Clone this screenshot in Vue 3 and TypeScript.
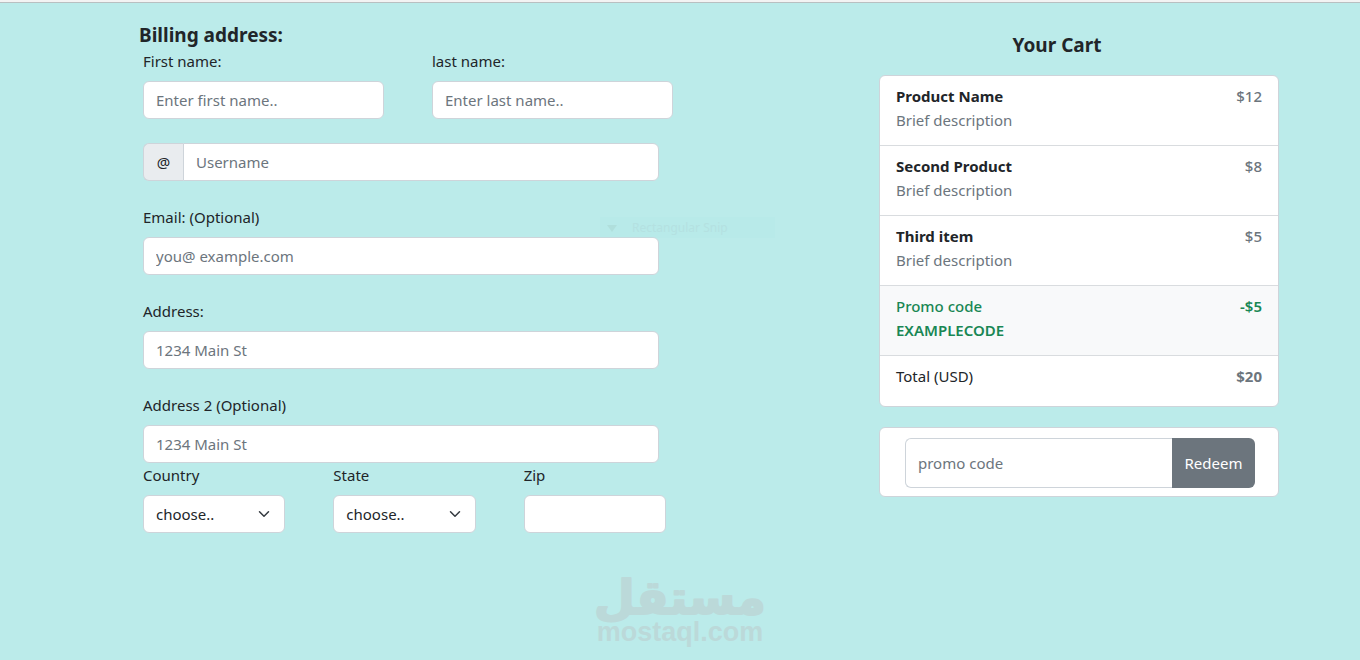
<script setup lang="ts">
import { ref } from 'vue'

interface CartItem {
  name: string
  detail: string
  price: string
  promo?: boolean
}

const items: CartItem[] = [
  { name: 'Product Name', detail: 'Brief description', price: '$12' },
  { name: 'Second Product', detail: 'Brief description', price: '$8' },
  { name: 'Third item', detail: 'Brief description', price: '$5' },
  { name: 'Promo code', detail: 'EXAMPLECODE', price: '-$5', promo: true },
]

const country = ref('')
const state = ref('')
const promoCode = ref('')
</script>

<template>
  <div class="page">
    <main class="layout">
      <form class="billing" @submit.prevent>
        <h1 class="title">Billing address:</h1>
        <div class="row names">
          <div class="field">
            <label for="first">First name:</label>
            <input id="first" class="control" type="text" placeholder="Enter first name.." />
          </div>
          <div class="field">
            <label for="last">last name:</label>
            <input id="last" class="control" type="text" placeholder="Enter last name.." />
          </div>
        </div>
        <div class="group wide">
          <label class="addon" for="username">@</label>
          <input id="username" class="control" type="text" placeholder="Username" />
        </div>
        <div class="field wide">
          <label for="email">Email: (Optional)</label>
          <input id="email" class="control" type="email" placeholder="you@ example.com" />
        </div>
        <div class="field wide">
          <label for="address">Address:</label>
          <input id="address" class="control" type="text" placeholder="1234 Main St" />
        </div>
        <div class="field wide last">
          <label for="address2">Address 2 (Optional)</label>
          <input id="address2" class="control" type="text" placeholder="1234 Main St" />
        </div>
        <div class="row region">
          <div class="field">
            <label for="country">Country</label>
            <div class="picker">
              <select id="country" v-model="country" class="control">
                <option value="">choose..</option>
              </select>
              <svg class="chevron" viewBox="0 0 16 16" aria-hidden="true"><path d="m2 5 6 6 6-6" /></svg>
            </div>
          </div>
          <div class="field">
            <label for="state">State</label>
            <div class="picker">
              <select id="state" v-model="state" class="control">
                <option value="">choose..</option>
              </select>
              <svg class="chevron" viewBox="0 0 16 16" aria-hidden="true"><path d="m2 5 6 6 6-6" /></svg>
            </div>
          </div>
          <div class="field">
            <label for="zip">Zip</label>
            <input id="zip" class="control" type="text" />
          </div>
        </div>
      </form>

      <section class="cart">
        <h2 class="title cart-title">Your Cart</h2>
        <ul class="list">
          <li v-for="item in items" :key="item.name" class="item" :class="{ promo: item.promo }">
            <div>
              <div class="name">{{ item.name }}</div>
              <div class="detail">{{ item.detail }}</div>
            </div>
            <span class="price">{{ item.price }}</span>
          </li>
          <li class="item total">
            <span>Total (USD)</span>
            <strong class="price">$20</strong>
          </li>
        </ul>
        <form class="redeem" @submit.prevent>
          <input v-model="promoCode" class="control code" type="text" placeholder="promo code" aria-label="promo code" />
          <button class="button" type="submit">Redeem</button>
        </form>
      </section>
    </main>

    <div class="snip">
      <svg class="snip-icon" viewBox="0 0 16 16" aria-hidden="true"><path d="M3 5h10l-5 7z" /></svg>
      <span>Rectangular Snip</span>
    </div>

    <svg class="watermark" viewBox="0 0 200 90" role="img" aria-label="mostaql.com">
      <text class="arabic" x="100" y="44" text-anchor="middle">مستقل</text>
      <text class="latin" x="100" y="71" text-anchor="middle">mostaql.com</text>
    </svg>
  </div>
</template>

<style>
body {
  margin: 0;
  background: #bbebea;
}
</style>

<style scoped>
* {
  box-sizing: border-box;
}

.page {
  position: relative;
  min-height: 100vh;
  border-top: 2px solid #f3f3f3;
  background: #bbebea;
  color: #212529;
  font-family: "Segoe UI", "Noto Sans", "Open Sans", sans-serif;
  font-size: 15px;
  line-height: 24px;
  box-shadow: inset 0 1px #b9bfc1;
}

.layout {
  display: grid;
  grid-template-columns: 139fr 534fr 206fr 400fr 81fr;
  padding-top: 21px;
  align-items: start;
}

.title {
  margin: 0;
  font-size: 19px;
  font-weight: 700;
  line-height: 24px;
}

.billing {
  grid-column: 2;
  padding-left: 4px;
}

.billing > .title {
  margin: 0 0 2px -4px;
}

.row {
  display: grid;
  column-gap: 48px;
}

.names {
  grid-template-columns: 1fr 1fr;
  margin-bottom: 24px;
}

.region {
  grid-template-columns: 1fr 1fr 1fr;
  margin-right: 7px;
}

.field {
  min-width: 0;
}

.field > label {
  display: block;
  margin-bottom: 8px;
}

.wide {
  margin: 0 14px 24px 0;
}

.wide.last {
  margin-bottom: 0;
}

.control {
  display: block;
  width: 100%;
  height: 38px;
  margin: 0;
  padding: 6px 12px;
  border: 1px solid #ced4da;
  border-radius: 6px;
  background: #fff;
  color: #212529;
  font: inherit;
  appearance: none;
}

.control::placeholder {
  color: #6c757d;
  opacity: 1;
}

.group {
  display: flex;
}

.addon {
  flex: none;
  width: 40px;
  padding: 6px 0;
  border: 1px solid #ced4da;
  border-right: 0;
  border-radius: 6px 0 0 6px;
  background: #e9ecef;
  text-align: center;
}

.group .control {
  flex: 1;
  min-width: 0;
  border-radius: 0 6px 6px 0;
}

.picker {
  display: grid;
  align-items: center;
}

.picker > * {
  grid-area: 1 / 1;
}

.chevron {
  width: 16px;
  height: 12px;
  margin-right: 13px;
  justify-self: end;
  pointer-events: none;
  fill: none;
  stroke: #343a40;
  stroke-width: 2;
  stroke-linecap: round;
  stroke-linejoin: round;
}

.cart {
  grid-column: 4;
  padding-top: 10px;
}

.cart-title {
  margin-bottom: 18px;
  padding-right: 44px;
  text-align: center;
}

.list {
  margin: 0 0 20px;
  padding: 0;
  overflow: hidden;
  border: 1px solid #ced4da;
  border-radius: 6px;
  background: #fff;
  list-style: none;
}

.item {
  display: flex;
  justify-content: space-between;
  padding: 8px 16px 13px;
  border-bottom: 1px solid #d9dcdf;
}

.name {
  font-weight: 700;
}

.detail {
  color: #6c757d;
}

.price {
  color: #6c757d;
  font-weight: 500;
}

.promo {
  background: #f8f9fa;
}

.promo .name,
.promo .detail,
.promo .price {
  color: #198754;
  font-weight: 500;
}

.promo .detail,
.promo .price {
  font-weight: 600;
}

.total {
  padding-bottom: 18px;
  border-bottom: 0;
}

.total .price {
  font-weight: 700;
}

.redeem {
  display: flex;
  padding: 10px 23px 8px 25px;
  border: 1px solid #ced4da;
  border-radius: 6px;
  background: #fff;
}

.code {
  flex: 1;
  min-width: 0;
  height: 50px;
  border-right: 0;
  border-radius: 6px 0 0 6px;
}

.button {
  width: 83px;
  height: 50px;
  padding: 0;
  border: 0;
  border-radius: 0 6px 6px 0;
  background: #6c757d;
  color: #fff;
  font: inherit;
}

.snip {
  position: absolute;
  top: 215px;
  left: 600px;
  display: flex;
  align-items: center;
  gap: 12px;
  width: 175px;
  height: 21px;
  padding-left: 4px;
  background: rgba(176, 232, 232, 0.25);
  color: #b4e1e1;
  font-size: 12px;
  pointer-events: none;
}

.snip-icon {
  width: 16px;
  height: 16px;
  fill: #b0dfdc;
}

.watermark {
  position: absolute;
  bottom: 0;
  left: 50%;
  width: 200px;
  height: 90px;
  transform: translateX(-50%);
  fill: #bbd9d9;
  pointer-events: none;
}

.arabic {
  font-family: "DejaVu Sans", sans-serif;
  font-size: 47px;
  font-weight: 700;
  stroke: #bbd9d9;
  stroke-width: 2;
  stroke-linejoin: round;
}

.latin {
  font-family: "Liberation Sans", sans-serif;
  font-size: 27px;
  font-weight: 700;
}
</style>
